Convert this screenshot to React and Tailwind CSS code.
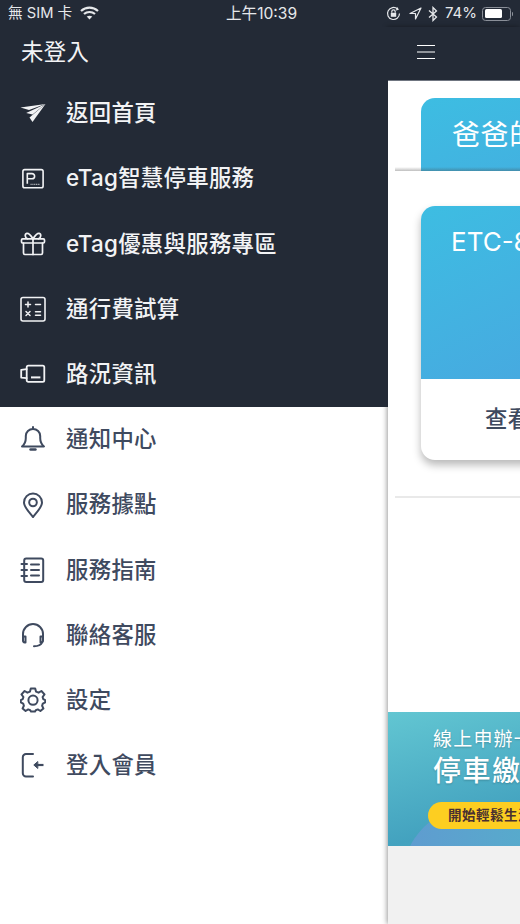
const FONT = 'font-["Inter","Noto_Sans_CJK_TC","Noto_Sans",sans-serif]';

const Svg = ({ children, w = 26, h = 26, sw = 1.7 }) => (
  <svg width={w} height={h} viewBox={`0 0 ${w} ${h}`} fill="none" stroke="currentColor" strokeWidth={sw} strokeLinecap="round" strokeLinejoin="round">
    {children}
  </svg>
);

const icons = {
  send: (
    <Svg>
      <path d="M0.5 7.5 L25.5 4 L9 10 Z" fill="currentColor" stroke="none" />
      <path d="M6.2 13 L25.5 4 L12.5 14.6 Z" fill="currentColor" stroke="none" />
      <path d="M9.5 17.6 L25.5 4 L12.5 22 Z" fill="currentColor" stroke="none" />
    </Svg>
  ),
  park: (
    <Svg>
      <rect x="2.9" y="3.6" width="20.2" height="18.2" rx="1.8" strokeWidth="1.6" />
      <path d="M7.3 17.8 V7.6 H12 A2.6 2.6 0 0 1 12 12.8 H7.3" strokeWidth="1.6" strokeLinecap="butt" />
      <path d="M10.5 18.3 H20" strokeWidth="1" strokeDasharray="1.2 0.6" strokeLinecap="butt" opacity="0.8" />
    </Svg>
  ),
  gift: (
    <Svg>
      <rect x="1.5" y="7.8" width="23" height="4.2" rx="1.2" />
      <path d="M3.5 12 V22 A1.5 1.5 0 0 0 5 23.5 H21 A1.5 1.5 0 0 0 22.5 22 V12" />
      <path d="M13 7.8 V23.5" />
      <path d="M13 7.8 C11 4.5 9 2 6.8 2.3 C4.5 2.8 4.8 6.8 7.5 7.8" />
      <path d="M13 7.8 C15 4.5 17 2 19.2 2.3 C21.5 2.8 21.2 6.8 18.5 7.8" />
    </Svg>
  ),
  calc: (
    <Svg>
      <rect x="1" y="1.5" width="24" height="23.5" rx="2" strokeWidth="1.6" />
      <path d="M5.5 8.5 H10.5 M8 6 V11 M15.5 8.5 H20.5 M6 15.5 L10 19.5 M10 15.5 L6 19.5 M15.5 15.8 H20.5 M15.5 19.2 H20.5" strokeWidth="1.5" />
    </Svg>
  ),
  road: (
    <Svg>
      <rect x="6.7" y="4.6" width="17.6" height="16.2" rx="1.6" strokeWidth="1.8" />
      <path d="M6.7 8.2 L1.2 8.8 V16.6 L6.7 17.2" strokeWidth="1.8" />
      <path d="M11 16.4 H20.4" strokeWidth="2" strokeLinecap="butt" />
    </Svg>
  ),
  bell: (
    <Svg sw={2}>
      <path d="M2 20.5 C4.5 18.5 5.8 16 5.8 12 V10 C5.8 6 9 3 13 3 C17 3 20.2 6 20.2 10 V12 C20.2 16 21.5 18.5 24 20.5 Z" />
      <path d="M13 1 V3" />
      <path d="M10.5 23.5 H15.5" strokeWidth="2.4" />
    </Svg>
  ),
  pin: (
    <Svg sw={2}>
      <path d="M13 25 C8.5 19.5 4 15 4 10.5 A9 9 0 0 1 22 10.5 C22 15 17.5 19.5 13 25 Z" />
      <circle cx="13" cy="10.5" r="3.8" />
    </Svg>
  ),
  book: (
    <Svg sw={2}>
      <rect x="4.2" y="1.5" width="19" height="23.5" rx="2" />
      <path d="M1.5 7 H7 M1.5 13 H7 M1.5 19 H7 M11 7.5 H19 M11 13 H19 M11 18.5 H19" />
    </Svg>
  ),
  headset: (
    <Svg sw={2}>
      <path d="M3 15 V12 A10 10 0 0 1 23 12 V15" />
      <path d="M3 14.5 H5.5 V20.5 H4.8 A2 2 0 0 1 3 18.5 Z" />
      <path d="M23 14.5 H20.5 V20.5 H21.2 A2 2 0 0 0 23 18.5 Z" />
      <path d="M22 20.5 C21 23 18.5 24.2 14 24.2" />
    </Svg>
  ),
  gear: (
    <Svg sw={2}>
      <path d="M10.8 1.8 H15.2 L16 5 L18.6 6.1 L21.4 4.4 L24.5 7.8 L22.6 10.4 L23.3 12.6 L25.2 13.6 V15.8 L22.8 17 L22.1 19.2 L23.4 21.8 L20.4 24.4 L17.8 22.8 L15.8 23.6 L15 25 H11 L10.2 23.6 L8.2 22.8 L5.6 24.4 L2.6 21.8 L3.9 19.2 L3.2 17 L0.8 15.8 V13.6 L2.7 12.6 L3.4 10.4 L1.5 7.8 L4.6 4.4 L7.4 6.1 L10 5 Z" transform="translate(0 -0.4)" />
      <circle cx="13" cy="13.2" r="4.6" />
    </Svg>
  ),
  login: (
    <Svg sw={2}>
      <path d="M13 2 H6 A3.2 3.2 0 0 0 2.8 5.2 V21.3 A3.2 3.2 0 0 0 6 24.5 H13" />
      <path d="M23.5 13 H17" strokeWidth="2.2" strokeLinecap="butt" />
      <path d="M17.5 9.8 L13.8 13 L17.5 16.2 Z" fill="currentColor" strokeWidth="1" />
    </Svg>
  ),
};

const dark = [
  ["send", "返回首頁"],
  ["park", "eTag智慧停車服務"],
  ["gift", "eTag優惠與服務專區"],
  ["calc", "通行費試算"],
  ["road", "路況資訊"],
];
const light = [
  ["bell", "通知中心"],
  ["pin", "服務據點"],
  ["book", "服務指南"],
  ["headset", "聯絡客服"],
  ["gear", "設定"],
  ["login", "登入會員"],
];

const Row = ({ icon, label, tone }) => (
  <div className={`flex h-[65.2px] items-center gap-[20px] pl-[20px] ${tone}`}>
    <span className="flex h-[26px] w-[26px] shrink-0 items-center justify-center">{icons[icon]}</span>
    <span className="whitespace-nowrap text-[22.4px] font-medium leading-none tracking-[0.3px]">{label}</span>
  </div>
);

const StatusBar = () => (
  <div className="relative flex h-[27px] items-center justify-between bg-[#232a36] pl-[8px] pr-[9px] text-[14.7px] text-[#e6e8eb]">
    <div className="flex items-center gap-[8px]">
      <span className="whitespace-nowrap">無 SIM 卡</span>
      <svg width="19" height="14" viewBox="0 0 19 14" fill="none" stroke="currentColor" strokeWidth="2.2">
        <path d="M1 5 C6 0.5 13 0.5 18 5" />
        <path d="M4 8 C7 5.3 12 5.3 15 8" />
        <path d="M9.5 13.5 L6.7 10.6 C8.4 9.4 10.6 9.4 12.3 10.6 Z" fill="currentColor" stroke="none" />
      </svg>
    </div>
    <span className="absolute left-[226px] whitespace-nowrap text-[15.6px]">上午10:39</span>
    <div className="flex items-center gap-[5px]">
      <svg width="15" height="15" viewBox="0 0 15 15" fill="none" stroke="currentColor" strokeWidth="1.2">
        <path d="M13.5 7.5 A6 6 0 1 1 11.5 3" />
        <path d="M11 1.5 L12 3.3 L10 4" />
        <rect x="4.8" y="6.8" width="5.4" height="4" fill="currentColor" stroke="none" />
        <path d="M5.8 6.8 V5.5 A1.7 1.7 0 0 1 9.2 5.5 V6.8" />
      </svg>
      <svg className="ml-[3px]" width="13" height="13" viewBox="0 0 13 13" fill="none" stroke="currentColor" strokeWidth="1.2" strokeLinejoin="round">
        <path d="M12 1 L1 6.5 H6.5 V12 Z" />
      </svg>
      <svg className="ml-[1px]" width="10" height="16" viewBox="0 0 10 16" fill="none" stroke="currentColor" strokeWidth="1.3">
        <path d="M1 4.5 L8.5 11 L5 14.5 V1.5 L8.5 5 L1 11.5" />
      </svg>
      <span className="ml-[2px] text-[15px]">74%</span>
      <div className="relative flex h-[14px] w-[29px] items-center rounded-[3.5px] border border-[#8a8f98] p-[1.5px]">
        <div className="h-full w-[74%] rounded-[1.5px] bg-white" />
        <span className="absolute -right-[3px] h-[4px] w-[1.5px] rounded-r-sm bg-[#8a8f98]" />
      </div>
    </div>
  </div>
);

const Main = () => (
  <div className="relative min-w-0 flex-1 overflow-hidden bg-white shadow-[-1px_0_5px_rgba(0,0,0,0.4)]">
    <div className="flex h-[53.8px] items-center border-b border-[#6f7580] bg-[#232a36] pb-[3px] pl-[29px]">
      <svg width="18" height="16" viewBox="0 0 18 16" fill="none" stroke="#fff" strokeWidth="1.2">
        <path d="M0 1.5 H18 M0 8 H18 M0 14.5 H18" />
      </svg>
    </div>
    <div className="relative h-[90.2px] w-[520px] overflow-hidden pl-[33px] pt-[17px]">
      <div className="h-[120px] w-[360px] rounded-t-[14px] bg-gradient-to-br from-[#3dbde2] to-[#47a3de] pl-[31px] pt-[23px] text-[28px] leading-none tracking-[0.6px] text-white">
        爸爸的車
      </div>
      <div className="absolute inset-x-0 bottom-0 ml-[7px] h-[4px] bg-gradient-to-b from-transparent to-[rgba(70,70,70,0.35)]" />
    </div>
    <div className="pl-[33px] pt-[35px]">
      <div className="w-[360px] overflow-hidden rounded-[14px] bg-white shadow-[0_5px_9px_rgba(0,0,0,0.28)]">
        <div className="h-[173px] bg-gradient-to-br from-[#3dbde2] to-[#4a9fdf] pl-[30px] pt-[20px] text-[26px] leading-[32px] text-white">
          ETC-8888
        </div>
        <div className="h-[81px] pl-[64px] pt-[29px] text-[22.4px] font-medium leading-none tracking-[0.3px] text-[#3f4a5f]">
          查看明細
        </div>
      </div>
    </div>
    <div className="ml-[7px] mt-[36px] h-[2px] bg-[#e9e9e9]" />
    <div className="h-[214px]" />
    <div className="relative h-[134px] w-[520px] overflow-hidden bg-gradient-to-br from-[#62c6d2] via-[#43a2bf] to-[#66c4cf]">
      <div className="absolute left-[14px] top-[93px] h-[150px] w-[150px] rounded-full bg-gradient-to-r from-[#5f9bd0] to-[#55aecb]" />
      <div className="relative pl-[45px] pt-[15px] text-white [text-shadow:0_1px_2px_rgba(0,0,0,0.2)]">
        <div className="text-[19px] leading-[25px] tracking-[1.2px]">線上申辦一卡通</div>
        <div className="mt-[3px] text-[28px] font-medium leading-[32px] tracking-[1.5px]">停車繳費</div>
        <div className="ml-[-5px] mt-[15px] flex h-[27px] w-[200px] items-center rounded-full bg-[#fdce21] pl-[20px] text-[13.5px] font-bold tracking-[0.5px] text-[#4a3030] [text-shadow:none]">
          開始輕鬆生活
        </div>
      </div>
    </div>
    <div className="h-[80px] bg-[#f1f1f1]" />
  </div>
);

export default function App() {
  return (
    <div className={`h-[924px] w-[520px] overflow-hidden bg-white ${FONT}`}>
      <StatusBar />
      <div className="flex h-[897px]">
        <div className="relative z-10 w-[388px] shrink-0">
          <div className="bg-[#232a36]">
            <div className="flex h-[53.8px] items-center pb-[3px] pl-[21px] text-[22.4px] leading-none tracking-[0.4px] text-[#f2f3f5]">未登入</div>
            {dark.map(([i, l]) => (
              <Row key={l} icon={i} label={l} tone="text-[#f2f3f5]" />
            ))}
          </div>
          {light.map(([i, l]) => (
            <Row key={l} icon={i} label={l} tone="text-[#3f4a5f]" />
          ))}
        </div>
        <Main />
      </div>
    </div>
  );
}
